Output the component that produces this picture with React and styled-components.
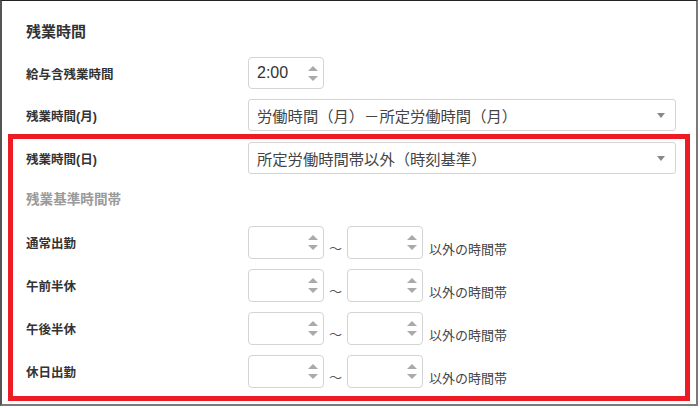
import React from 'react';
import styled, { createGlobalStyle } from 'styled-components';

const GlobalStyle = createGlobalStyle`
	body {
		margin: 0;
		background: #fff;
		font-family: "Liberation Sans", "Noto Sans CJK JP", sans-serif;
		color: #333;
	}
`;

const Frame = styled.div`
	box-sizing: border-box;
	width: 698px;
	height: 406px;
	border-top: 1px solid #222;
	border-left: 2px solid #555;
	border-right: 2px solid #7a7a7a;
	border-bottom: 2px solid #7a7a7a;
	padding: 0 6px;
	display: flex;
	flex-direction: column;
`;

const Top = styled.div`
	padding: 21px 14px 0 18px;
	display: flex;
	flex-direction: column;
`;

const Title = styled.div`
	font-size: 15px;
	font-weight: 700;
	line-height: 20px;
	color: #333;
	margin-bottom: 15px;
`;

const Highlight = styled.div`
	margin-top: 3px;
	border: 5px solid #ed1c24;
	padding: 3px 9px 8px 13px;
	display: flex;
	flex-direction: column;
`;

const Row = styled.div`
	display: flex;
	align-items: center;
	margin-top: ${(props) => props.$gap || 0}px;
`;

const Label = styled.div`
	width: 222px;
	flex-shrink: 0;
	font-size: 12.5px;
	font-weight: 700;
	color: #333;
`;

const SubHeading = styled.div`
	font-size: 13.6px;
	font-weight: 700;
	line-height: 20px;
	color: #9a9a9a;
	margin-top: 16px;
`;

const Select = styled.div`
	box-sizing: border-box;
	flex: 1;
	height: 32px;
	border: 1px solid #d4d4d4;
	border-radius: 3px;
	padding: 0 9px 0 8px;
	display: flex;
	align-items: center;
	justify-content: space-between;
	font-size: 15.3px;
	color: #444;
`;

const Caret = styled.span`
	width: 0;
	height: 0;
	border-left: 4px solid transparent;
	border-right: 4px solid transparent;
	border-top: 5px solid #888;
	margin-right: 1px;
`;

const Spin = styled.div`
	box-sizing: border-box;
	width: 76px;
	height: ${(props) => props.$h || 33}px;
	border: 1px solid #d4d4d4;
	border-radius: 4px;
	padding: 0 5px 0 8px;
	display: flex;
	align-items: center;
	justify-content: space-between;
	font-size: 16px;
	color: #333;
	flex-shrink: 0;
`;

const Arrows = styled.div`
	display: flex;
	flex-direction: column;
	gap: 5px;
	margin-left: auto;
`;

const Arrow = styled.span`
	width: 0;
	height: 0;
	border-left: 5px solid transparent;
	border-right: 5px solid transparent;
	${(props) => (props.$up ? 'border-bottom: 5px solid #aaa;' : 'border-top: 5px solid #aaa;')}
`;

const Range = styled.div`
	display: flex;
	align-items: flex-end;
`;

const Tilde = styled.span`
	width: 23px;
	text-align: center;
	font-size: 13px;
	line-height: 16px;
	color: #555;
	margin-bottom: 2px;
`;

const Suffix = styled.span`
	margin-left: 6px;
	font-size: 13px;
	line-height: 16px;
	color: #444;
	margin-bottom: 1px;
`;

const SpinBox = ({ value, h }) => (
	<Spin $h={h}>
		<span>{value}</span>
		<Arrows>
			<Arrow $up />
			<Arrow />
		</Arrows>
	</Spin>
);

const shifts = ['通常出勤', '午前半休', '午後半休', '休日出勤'];

const App = () => {
	return (
		<>
			<GlobalStyle />
			<Frame>
				<Top>
					<Title>残業時間</Title>
					<Row>
						<Label>給与含残業時間</Label>
						<SpinBox value="2:00" h={32} />
					</Row>
					<Row $gap={10}>
						<Label>残業時間(月)</Label>
						<Select>
							<span>労働時間（月）－所定労働時間（月）</span>
							<Caret />
						</Select>
					</Row>
				</Top>
				<Highlight>
					<Row>
						<Label>残業時間(日)</Label>
						<Select>
							<span>所定労働時間帯以外（時刻基準）</span>
							<Caret />
						</Select>
					</Row>
					<SubHeading>残業基準時間帯</SubHeading>
					{shifts.map((name, i) => (
						<Row key={name} $gap={i === 0 ? 16 : 10}>
							<Label>{name}</Label>
							<Range>
								<SpinBox />
								<Tilde>～</Tilde>
								<SpinBox />
								<Suffix>以外の時間帯</Suffix>
							</Range>
						</Row>
					))}
				</Highlight>
			</Frame>
		</>
	);
};

export default App;
